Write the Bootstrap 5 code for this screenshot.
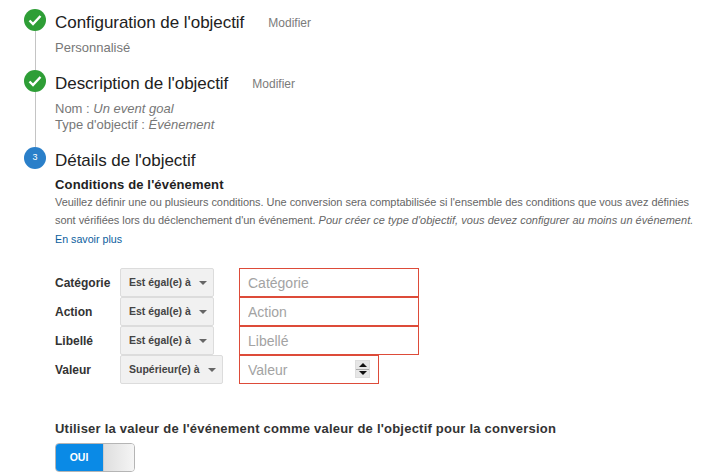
<!DOCTYPE html>
<html lang="fr"><head><meta charset="utf-8"><title>Objectif</title>
<link href="https://cdn.jsdelivr.net/npm/bootstrap@5.3.0/dist/css/bootstrap.min.css" rel="stylesheet">
<style>
html,body{height:476px;overflow:hidden;background:#fff}
body{font-family:"Liberation Sans",Arial,sans-serif;font-size:12px;color:#222;padding:9px 0 0 24px}
.step-rail{width:22px;margin-right:9px;flex:none}
.step-dot{width:22px;height:22px;border-radius:50%;flex:none;background:#2e9e36;color:#fff;font-size:9px}
.step-dot.is-cur{background:#2a7fc9}
.step-line{width:1px;flex:1;background:#c4c4c4}
.step-title{font-size:17px;line-height:22px;color:#212121;margin:0;font-weight:400;padding-top:3px;letter-spacing:-.04px}
.step-edit{font-size:12px;color:#7b7b7b;margin-left:24px;position:relative;top:1px}
.step-meta{font-size:13px;line-height:16px;color:#777}
.s1{height:61px}.s2{height:77px}
.s1 .step-meta{margin-top:6px}.s2 .step-meta{margin-top:6px}
.cond-title{font-size:13px;font-weight:700;line-height:16px;margin-top:5px;color:#222;letter-spacing:.15px}
.cond-text{font-size:11px;line-height:17.5px;color:#666;width:650px;margin-top:1px;letter-spacing:-.04px}
.cond-text em{letter-spacing:.02px}
.cond-more{font-size:10.7px;color:#0b5e9e;text-decoration:none;display:block;line-height:16px;margin-top:2px}
.cond-form{margin-top:21px;margin-left:0}
.cond-row{height:29px}
.cond-label{width:65px;font-size:12px;font-weight:700;color:#333}
.cond-btn{height:29px;width:94px;border:1px solid #dcdcdc;border-radius:2px;background:#f1f1f1;font-size:10.5px;font-weight:700;color:#444;padding:0 0 0 8px;margin-right:25px;flex:none}
.cond-btn.wide{width:103px;margin-right:16px}
.cond-caret{width:0;height:0;border-left:4px solid transparent;border-right:4px solid transparent;border-top:4px solid #666;margin-left:8px}
.cond-box{width:180px;height:29px;border:1px solid #dd4b39;border-radius:0;padding:0 8px;font-size:14px;color:#333;box-shadow:none;background:#fff}
.cond-box::placeholder{color:#a3a3a3;opacity:1}
.cond-box.short{width:140px}
.spin{position:absolute;right:9px;top:5px;width:15px;height:18px;background:#e6e6e6;border:1px solid #ddd}
.spin i{flex:1;display:flex;align-items:center;justify-content:center}
.spin i:first-child{border-bottom:1px solid #aaa}
.spin b{width:0;height:0;border-left:4px solid transparent;border-right:4px solid transparent}
.spin .up{border-bottom:4px solid #111}.spin .dn{border-top:4px solid #111}
.use-title{font-size:13px;font-weight:700;letter-spacing:.22px;color:#333;margin:37px 0 0 0;line-height:16px}
.tog{width:80px;height:29px;margin-top:6px;border-radius:4px;overflow:hidden;border:1px solid #b5b5b5}
.tog-on{width:48px;background:#0a8ae6;color:#fff;font-size:10.5px;font-weight:700;margin:-1px 0 -1px -1px}
.tog-off{flex:1;background:linear-gradient(90deg,#dedede,#f5f5f5);border-left:1px solid #ccc}
</style></head><body>
<div class="d-flex s1">
 <div class="step-rail d-flex flex-column align-items-center"><div class="step-dot d-flex align-items-center justify-content-center"><svg width="14" height="12" viewBox="0 0 14 12"><path d="M1.5 6.5 5 10 12.5 2" fill="none" stroke="#fff" stroke-width="2.4"/></svg></div><div class="step-line"></div></div>
 <div><div class="d-flex align-items-center"><h2 class="step-title">Configuration de l'objectif</h2><span class="step-edit">Modifier</span></div><div class="step-meta">Personnalisé</div></div>
</div>
<div class="d-flex s2">
 <div class="step-rail d-flex flex-column align-items-center"><div class="step-dot d-flex align-items-center justify-content-center"><svg width="14" height="12" viewBox="0 0 14 12"><path d="M1.5 6.5 5 10 12.5 2" fill="none" stroke="#fff" stroke-width="2.4"/></svg></div><div class="step-line"></div></div>
 <div><div class="d-flex align-items-center"><h2 class="step-title">Description de l'objectif</h2><span class="step-edit">Modifier</span></div><div class="step-meta">Nom : <em>Un event goal</em><br>Type d'objectif : <em>Événement</em></div></div>
</div>
<div class="d-flex">
 <div class="step-rail"><div class="step-dot is-cur d-flex align-items-center justify-content-center">3</div></div>
 <div>
  <h2 class="step-title">Détails de l'objectif</h2>
  <div class="cond-title">Conditions de l'événement</div>
  <div class="cond-text">Veuillez définir une ou plusieurs conditions. Une conversion sera comptabilisée si l'ensemble des conditions que vous avez définies sont vérifiées lors du déclenchement d'un événement. <em>Pour créer ce type d'objectif, vous devez configurer au moins un événement.</em></div>
  <a class="cond-more" href="#">En savoir plus</a>
  <div class="cond-form">
   <div class="cond-row d-flex align-items-center"><div class="cond-label">Catégorie</div><div class="cond-btn d-flex align-items-center">Est égal(e) à<span class="cond-caret"></span></div><input class="cond-box form-control" placeholder="Catégorie"></div>
   <div class="cond-row d-flex align-items-center"><div class="cond-label">Action</div><div class="cond-btn d-flex align-items-center">Est égal(e) à<span class="cond-caret"></span></div><input class="cond-box form-control" placeholder="Action"></div>
   <div class="cond-row d-flex align-items-center"><div class="cond-label">Libellé</div><div class="cond-btn d-flex align-items-center">Est égal(e) à<span class="cond-caret"></span></div><input class="cond-box form-control" placeholder="Libellé"></div>
   <div class="cond-row d-flex align-items-center"><div class="cond-label">Valeur</div><div class="cond-btn wide d-flex align-items-center">Supérieur(e) à<span class="cond-caret"></span></div><div class="position-relative"><input class="cond-box short form-control" placeholder="Valeur"><div class="spin d-flex flex-column"><i><b class="up"></b></i><i><b class="dn"></b></i></div></div></div>
  </div>
  <div class="use-title">Utiliser la valeur de l'événement comme valeur de l'objectif pour la conversion</div>
  <div class="tog d-flex"><div class="tog-on d-flex align-items-center justify-content-center">OUI</div><div class="tog-off"></div></div>
 </div>
</div>
</body></html>
